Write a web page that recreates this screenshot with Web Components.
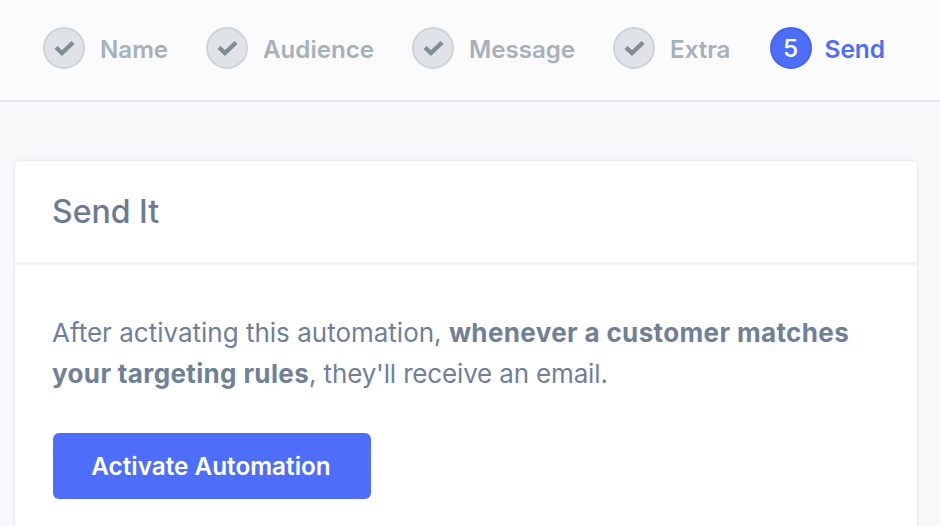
<!DOCTYPE html>
<html>
<head>
<meta charset="utf-8">
<title>Send It</title>
<style>
  html, body { margin: 0; height: 100%; }
  body { background: #f6f8fa; font-family: Inter, "Liberation Sans", sans-serif; overflow: hidden; }
  strong { letter-spacing: .36px; }
  .tail { letter-spacing: -.16px; }
</style>
</head>
<body>
<wizard-bar>
  <wizard-step done label="Name"></wizard-step>
  <wizard-step done label="Audience"></wizard-step>
  <wizard-step done label="Message"></wizard-step>
  <wizard-step done label="Extra"></wizard-step>
  <wizard-step active label="Send" number="5"></wizard-step>
</wizard-bar>
<main-area>
  <panel-card>
    <span slot="title">Send It</span>
    <p>After activating this automation, <strong>whenever a customer matches your targeting rules</strong><span class="tail">, they'll receive an email.</span></p>
    <action-button>Activate Automation</action-button>
  </panel-card>
</main-area>
<script>
const define = (name, html, setup) => {
  customElements.define(name, class extends HTMLElement {
    constructor() {
      super();
      this.attachShadow({ mode: 'open' }).innerHTML = html;
    }
    connectedCallback() {
      setup && setup(this);
    }
  });
};

define('wizard-bar', `
  <style>
    :host {
      display: flex;
      box-sizing: border-box;
      height: 102px;
      padding: 0 0 4px 43px;
      align-items: center;
      gap: 38px;
      background: #fbfbfc;
      border-bottom: 2px solid #dfe6ec;
    }
  </style>
  <slot></slot>
`);

// check mark for finished steps, number for the current one
define('wizard-step', `
  <style>
    :host {
      display: flex;
      align-items: center;
      gap: 15px;
      font-size: 24.1px;
      font-weight: 600;
      color: #a6b1bb;
    }
    :host([active]) { color: #4e6ef9; gap: 13px; margin-left: 2px; font-size: 24.5px; }
    .dot {
      box-sizing: border-box;
      flex: none;
      width: 42px;
      height: 42px;
      border-radius: 50%;
      border: 2px solid #ced3da;
      background: #dfe2e7;
      display: flex;
      align-items: center;
      justify-content: center;
      color: #fff;
      font-weight: 500;
    }
    :host([active]) .dot { background: #4e6ef9; border-color: #4464ee; padding-right: 2px; }
    .label { position: relative; top: 1px; }
    :host([active]) .label { left: -1px; }
    svg { width: 22px; height: 18px; display: block; }
  </style>
  <span class="dot"></span><span class="label"></span>
`, (el) => {
  const root = el.shadowRoot;
  root.querySelector('.label').textContent = el.getAttribute('label');
  root.querySelector('.dot').innerHTML = el.hasAttribute('done')
    ? '<svg viewBox="0 0 22 18"><path d="M3 8.5 L9 14 L20 3.5" fill="none" stroke="#828c94" stroke-width="4.4"/></svg>'
    : el.getAttribute('number');
});

define('main-area', `
  <style>
    :host { display: block; padding: 59px 23px 0 15px; }
  </style>
  <slot></slot>
`);

define('panel-card', `
  <style>
    :host {
      display: block;
      background: #fff;
      border-radius: 5px;
      box-shadow: 0 0 3px rgba(90, 120, 150, .2);
      color: #708097;
    }
    header {
      height: 104px;
      box-sizing: border-box;
      padding: 0 37px;
      display: flex;
      align-items: center;
      font-size: 32px;
      font-weight: 500;
      color: #6c7b91;
      border-bottom: 3px solid #f1f3f6;
    }
    .body {
      padding: 47px 37px 0 38px;
      font-size: 26px;
      line-height: 41px;
    }
    ::slotted(p) { margin: 0 0 39px -1px; }
    ::slotted(action-button) { margin-bottom: 40px; }
  </style>
  <header><slot name="title"></slot></header>
  <div class="body"><slot></slot></div>
`);

define('action-button', `
  <style>
    :host {
      display: inline-flex;
      box-sizing: border-box;
      width: 318px;
      height: 66px;
      padding-right: 2px;
      align-items: center;
      justify-content: center;
      background: #4e6ef9;
      color: #fff;
      border-radius: 6px;
      font-size: 24.3px;
      font-weight: 600;
    }
  </style>
  <slot></slot>
`);
</script>
</body>
</html>
